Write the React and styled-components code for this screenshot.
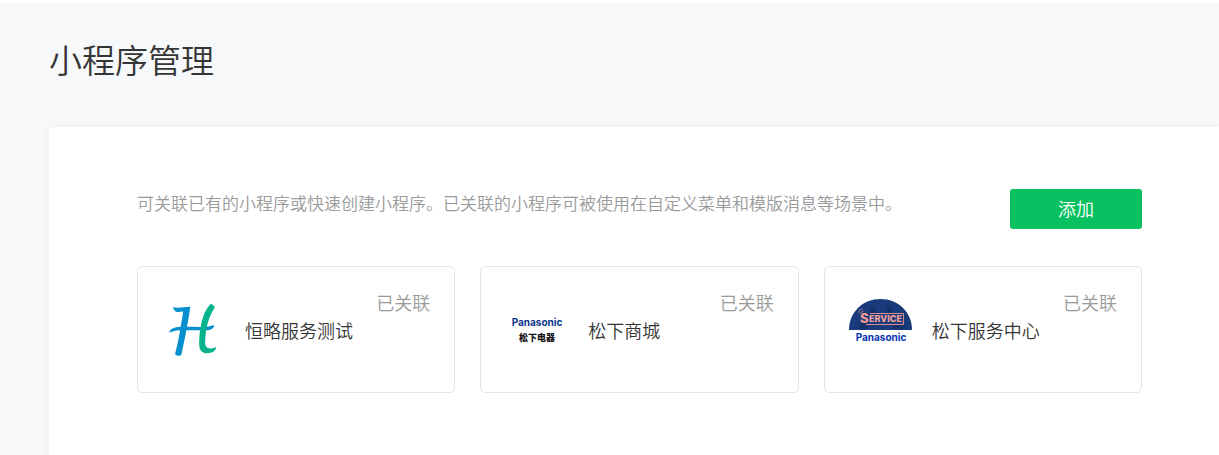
import React from "react";
import styled, { createGlobalStyle } from "styled-components";

const GlobalStyle = createGlobalStyle`
  *, *::before, *::after { box-sizing: border-box; }
  html { background: #f6f8f9; }
  body {
    margin: 0;
    color: #353535;
    font-family: "Noto Sans CJK SC", "Liberation Sans", sans-serif;
    font-size: 18px;
    line-height: 24px;
  }
`;

const Page = styled.div`
  display: flex;
  flex-direction: column;
  min-height: 100vh;
  padding-left: 49px;
  border-top: 3px solid #ffffff;
  background: #f6f8f9;
`;

const Header = styled.header`
  padding: 32px 0 44px;
`;

const Title = styled.h1`
  margin: 0;
  font-size: 33px;
  font-weight: 350;
  line-height: 48px;
`;

const Panel = styled.main`
  flex: 1;
  padding: 62px 77px 62px 88px;
  border-top-left-radius: 4px;
  background: #ffffff;
  box-shadow: 0 1px 10px rgba(0, 0, 0, 0.05);
`;

const Toolbar = styled.div`
  display: flex;
  align-items: flex-start;
  justify-content: space-between;
  gap: 24px;
  margin-bottom: 37px;
`;

const Description = styled.p`
  margin: 0;
  padding-top: 2px;
  color: #9a9a9a;
  font-size: 17px;
  font-weight: 350;
`;

const AddButton = styled.button`
  flex: none;
  width: 132px;
  height: 40px;
  padding: 0 0 2px;
  border: 0;
  border-radius: 3px;
  background: #07c160;
  color: #ffffff;
  font: inherit;
  font-weight: 350;
  cursor: pointer;
`;

const CardGrid = styled.ul`
  display: grid;
  grid-template-columns: repeat(3, minmax(0, 1fr));
  gap: 25px;
  margin: 0;
  padding: 0;
  list-style: none;
`;

const Card = styled.li`
  display: flex;
  align-items: center;
  min-height: 127px;
  padding: 0 24px;
  border: 1px solid #e4e6e9;
  border-radius: 5px;
`;

const Logo = styled.svg`
  flex: none;
  width: 64px;
  height: 64px;
  margin-right: 19px;
`;

const Name = styled.span`
  font-weight: 350;
  white-space: nowrap;
`;

const Status = styled.span`
  align-self: flex-start;
  margin: 23px 0 0 auto;
  color: #9a9a9a;
  font-weight: 350;
  white-space: nowrap;
`;

const Wordmark = styled.text`
  font-family: Inter, "Liberation Sans", sans-serif;
  font-size: 10px;
  font-weight: 700;
  text-anchor: middle;
`;

const ChineseMark = styled.text`
  font-family: "Noto Sans CJK SC", sans-serif;
  font-size: 9px;
  font-weight: 900;
  text-anchor: middle;
`;

const ServiceMark = styled.text`
  font-family: Inter, "Liberation Sans", sans-serif;
  font-size: ${({ $size }) => $size}px;
  font-weight: 800;
`;

function HengLueLogo() {
  return (
    <Logo viewBox="0 0 64 64" aria-hidden="true">
      <path
        fill="#0790cf"
        d="M11 9.2C14.5 10.2 21 9.4 28.3 8.8C27.6 15 26.2 22 25 28.8C32 28.9 39 29.1 44 28.7C48 28.4 49.5 27.4 52.4 27.2C51.6 30.4 49 32.2 44 32.3L24.4 32.3C22.9 40.2 20.8 49.5 19.5 56.6C18.2 58.4 15.5 58.2 13 56.2C15.1 48.5 16.8 40 18.1 32.3C13.5 32.4 11.3 33.6 7.2 34.4C8.4 30.8 12 29 18.7 28.8C19.7 23 20.6 18.2 21.1 13.6C18 13.6 15.4 14.6 13.6 13.4C12.2 12.2 11.3 11 11 9.2Z"
      />
      <path
        fill="#06b38c"
        d="M48.5 6C50.3 6.2 52 7.4 52.8 9.4C48.2 16.2 45.7 23.2 44.4 31C43.4 37 43 42.2 43.2 46.2C43.6 50.6 49 51.6 54.3 49.1C53.5 53.5 49.8 55.3 45.6 55.3C39.8 55.3 37.4 52 37.2 46.5C37 38.5 38.3 28 40.6 20.5C42.3 14.8 45 9.8 48.5 6Z"
      />
    </Logo>
  );
}

function StoreLogo() {
  return (
    <Logo viewBox="0 0 64 64" aria-hidden="true">
      <Wordmark x="32" y="28" fill="#09368c">Panasonic</Wordmark>
      <ChineseMark x="32" y="43" fill="#171313">松下电器</ChineseMark>
    </Logo>
  );
}

function ServiceLogo() {
  return (
    <Logo viewBox="0 0 64 64" aria-hidden="true">
      <path fill="#193b7b" d="M0 32C0 14 14 1 31.500 1S63 14 63 32Z" />
      <g fill="#15316a">
        <circle cx="24" cy="10" r="2" />
        <path d="M21 12h6l2 5h-9zM39 7l5 4-2 5-5-3zM11 26l6-2 4 4-3 3h-7zM45 26h8l2 5H43z" />
      </g>
      <path fill="none" stroke="#d88f92" d="M21 15.500H54.500V26.500H17" />
      <path fill="none" stroke="#9b7892" d="M9.500 15l1-3 3-1M11.500 16l1-2 2-1" />
      <ServiceMark x="11" y="25" $size={13} fill="#f29891">S</ServiceMark>
      <ServiceMark x="20" y="24" $size={9} fill="#f0a09c">ERVICE</ServiceMark>
      <Wordmark x="32" y="43" fill="#0635b4">Panasonic</Wordmark>
    </Logo>
  );
}

const programs = [
  { name: "恒略服务测试", Icon: HengLueLogo },
  { name: "松下商城", Icon: StoreLogo },
  { name: "松下服务中心", Icon: ServiceLogo },
];

export default function App() {
  return (
    <>
      <GlobalStyle />
      <Page>
        <Header>
          <Title>小程序管理</Title>
        </Header>
        <Panel>
          <Toolbar>
            <Description>
              可关联已有的小程序或快速创建小程序。已关联的小程序可被使用在自定义菜单和模版消息等场景中。
            </Description>
            <AddButton type="button">添加</AddButton>
          </Toolbar>
          <CardGrid>
            {programs.map(({ name, Icon }) => (
              <Card key={name}>
                <Icon />
                <Name>{name}</Name>
                <Status>已关联</Status>
              </Card>
            ))}
          </CardGrid>
        </Panel>
      </Page>
    </>
  );
}
